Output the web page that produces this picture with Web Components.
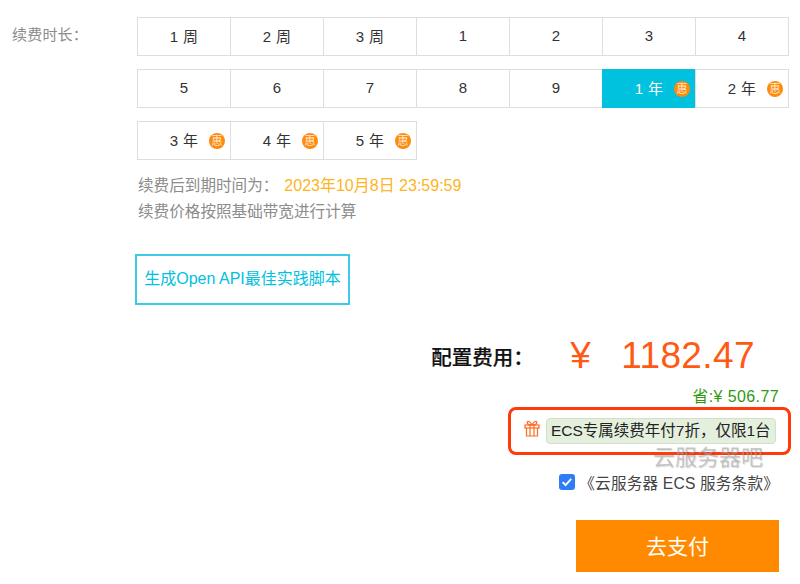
<!DOCTYPE html>
<html lang="zh">
<head>
<meta charset="utf-8">
<title>续费</title>
<style>
  html, body { margin: 0; background: #fff; }
  body { font-family: "Liberation Sans", "Noto Sans CJK SC", sans-serif; width: 800px; height: 584px; overflow: hidden; }
</style>
</head>
<body>
<renew-page></renew-page>
<script>
// Una celda de la rejilla de duración
class DurationCell extends HTMLElement {
  constructor() {
    super();
    this.attachShadow({ mode: "open" });
  }
  connectedCallback() {
    const badge = this.hasAttribute("deal") ? `<span class="badge">惠</span>` : "";
    this.shadowRoot.innerHTML = `
      <style>
        :host {
          display: flex;
          position: relative;
          box-sizing: border-box;
          flex: 0 0 94px;
          height: 39px;
          padding-bottom: 2px;
          margin-right: -1px;
          align-items: center;
          justify-content: center;
          border: 1px solid #dedede;
          color: #333;
          font-size: 15px;
          letter-spacing: 0.3px;
          background: #fff;
        }
        :host([selected]) {
          background: #00c1de;
          border-color: #00c1de;
          color: #fff;
        }
        .badge {
          position: absolute;
          right: 5px;
          top: 11px;
          width: 16px;
          height: 16px;
          border-radius: 50%;
          background: #ff8a0e;
          color: #ffe9d0;
          font-size: 11px;
          letter-spacing: 0;
          line-height: 16px;
          text-align: center;
        }
      </style>
      <slot></slot>${badge}
    `;
  }
}
customElements.define("duration-cell", DurationCell);

// Fila de celdas
class DurationRow extends HTMLElement {
  constructor() {
    super();
    this.attachShadow({ mode: "open" });
    this.shadowRoot.innerHTML = `
      <style>
        :host { display: flex; }
      </style>
      <slot></slot>
    `;
  }
}
customElements.define("duration-row", DurationRow);

// Bloque de precio, cupón y pago
class PayPanel extends HTMLElement {
  constructor() {
    super();
    this.attachShadow({ mode: "open" });
    this.shadowRoot.innerHTML = `
      <style>
        :host {
          display: flex;
          flex-direction: column;
          align-items: flex-end;
          position: relative;
        }
        .price {
          display: flex;
          align-items: center;
          height: 48px;
          margin-right: 45px;
        }
        .price .label { font-size: 20.5px; font-weight: 500; color: #111; width: 139px; -webkit-text-stroke: 0.2px #111; }
        .price .yen { font-size: 37px; color: #ff5a14; width: 51px; }
        .price .num { font-size: 37px; color: #ff5a14; letter-spacing: 0.4px; }
        .save {
          margin: 8px 21px 0 0;
          font-size: 16px;
          line-height: 18px;
          letter-spacing: 0.4px;
          color: #2f9a10;
        }
        .promo {
          box-sizing: border-box;
          display: flex;
          align-items: center;
          width: 283px;
          height: 48px;
          margin: 1px 9px 0 0;
          padding-left: 13px;
          border: 3px solid #ff3b0a;
          border-radius: 8px;
        }
        .promo svg { display: block; margin-right: 6px; margin-top: -5px; }
        .tag {
          box-sizing: border-box;
          height: 26px;
          line-height: 24px;
          margin-top: -1px;
          padding: 0 4px;
          white-space: nowrap;
          background: #e4efdd;
          border: 1px solid #d0e2c6;
          border-radius: 4px;
          font-size: 15.5px;
          color: #222;
        }
        .terms {
          display: flex;
          align-items: center;
          margin: 18px 21px 0 0;
          height: 18px;
          font-size: 15.6px;
          color: #444;
          letter-spacing: 0.2px;
        }
        .check {
          display: block;
          width: 16px;
          height: 16px;
          margin-right: 4px;
        }
        .pay {
          box-sizing: border-box;
          width: 203px;
          height: 52px;
          margin: 29px 21px 0 0;
          background: #ff8a00;
          color: #fff;
          font-size: 21px;
          line-height: 53px;
          text-align: center;
        }
        .mark {
          position: absolute;
          left: 653px;
          top: 113px;
          font-size: 22px;
          line-height: 26px;
          color: rgba(165, 165, 165, 0.6);
          text-shadow: 1px 1px 1px rgba(0, 0, 0, 0.12);
          white-space: nowrap;
        }
      </style>
      <div class="price">
        <span class="label">配置费用：</span>
        <span class="yen">¥</span>
        <span class="num">1182.47</span>
      </div>
      <div class="save">省:¥ 506.77</div>
      <div class="promo">
        <svg width="16" height="17" viewBox="0 0 16 17" fill="none" stroke="#ff6a1f" stroke-width="1.2">
          <rect x="1" y="5" width="14" height="3"/>
          <path d="M2.5 8v8h11V8M6 5v11M10 5v11"/>
          <path d="M8 5C6 1 3 .5 3.2 2.6 3.4 4.4 6 5 8 5c2 0 4.6-.6 4.8-2.4C13 .5 10 1 8 5z"/>
        </svg>
        <span class="tag">ECS专属续费年付7折，仅限1台</span>
      </div>
      <div class="mark">云服务器吧</div>
      <div class="terms">
        <svg class="check" viewBox="0 0 16 16">
          <rect width="16" height="16" rx="3" fill="#2f7df6"/>
          <path d="M3.6 8.2l3 3 5.6-6.4" fill="none" stroke="#fff" stroke-width="1.9"/>
        </svg>
        <span>《云服务器 ECS 服务条款》</span>
      </div>
      <div class="pay">去支付</div>
    `;
  }
}
customElements.define("pay-panel", PayPanel);

// Página completa
class RenewPage extends HTMLElement {
  constructor() {
    super();
    this.attachShadow({ mode: "open" });
    this.shadowRoot.innerHTML = `
      <style>
        :host { display: block; padding-top: 17px; }
        .top { display: flex; }
        .name {
          width: 137px;
          box-sizing: border-box;
          padding: 9px 0 0 12px;
          font-size: 15px;
          line-height: 18px;
          color: #8c8c8c;
          letter-spacing: 0.2px;
        }
        .rows { display: flex; flex-direction: column; gap: 13px; }
        .notes {
          margin: 13px 0 0 138px;
          font-size: 15.6px;
          line-height: 26px;
          color: #8c8c8c;
        }
        .notes b { font-weight: 400; font-size: 16px; color: #ffb422; margin-left: 6px; }
        .api {
          box-sizing: border-box;
          display: block;
          width: 215px;
          height: 51px;
          margin: 29px 0 0 135px;
          border: 2px solid #3ccbe4;
          color: #00c1de;
          font-size: 16px;
          line-height: 46px;
          text-align: center;
          white-space: nowrap;
        }
        pay-panel { margin-top: 27px; }
      </style>
      <div class="top">
        <div class="name">续费时长：</div>
        <div class="rows">
          <duration-row>
            <duration-cell>1 周</duration-cell>
            <duration-cell>2 周</duration-cell>
            <duration-cell>3 周</duration-cell>
            <duration-cell>1</duration-cell>
            <duration-cell>2</duration-cell>
            <duration-cell>3</duration-cell>
            <duration-cell>4</duration-cell>
          </duration-row>
          <duration-row>
            <duration-cell>5</duration-cell>
            <duration-cell>6</duration-cell>
            <duration-cell>7</duration-cell>
            <duration-cell>8</duration-cell>
            <duration-cell>9</duration-cell>
            <duration-cell selected deal>1 年</duration-cell>
            <duration-cell deal>2 年</duration-cell>
          </duration-row>
          <duration-row>
            <duration-cell deal>3 年</duration-cell>
            <duration-cell deal>4 年</duration-cell>
            <duration-cell deal>5 年</duration-cell>
          </duration-row>
        </div>
      </div>
      <div class="notes">
        <div>续费后到期时间为：<b>2023年10月8日 23:59:59</b></div>
        <div>续费价格按照基础带宽进行计算</div>
      </div>
      <div class="api">生成Open API最佳实践脚本</div>
      <pay-panel></pay-panel>
    `;
  }
}
customElements.define("renew-page", RenewPage);
</script>
</body>
</html>
